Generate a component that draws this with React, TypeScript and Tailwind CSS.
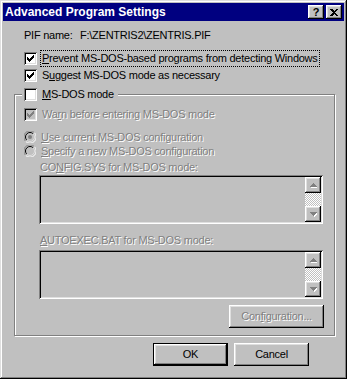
import React from "react";

const raised =
  "shadow-[inset_-1px_-1px_#000,inset_1px_1px_#fff,inset_-2px_-2px_#808080,inset_2px_2px_#dfdfdf]";
const sunken =
  "shadow-[inset_1px_1px_#808080,inset_-1px_-1px_#fff,inset_2px_2px_#000,inset_-2px_-2px_#dfdfdf]";
const dimText = "text-[#808080] [text-shadow:1px_1px_0_#fff]";

// 7x7 win95 check mark, row by row
const checkRows = ["......X", ".....XX", "X...XXX", "XX.XXX.", "XXXXX..", ".XXX...", "..X...."];

function Check({ color }: { color: string }) {
  return (
    <svg width="7" height="7" viewBox="0 0 7 7" shapeRendering="crispEdges">
      {checkRows.map((row, y) =>
        row.split("").map((c, x) =>
          c === "X" ? <rect key={`${x}-${y}`} x={x} y={y} width="1" height="1" fill={color} /> : null
        )
      )}
    </svg>
  );
}

function Checkbox({ checked, disabled }: { checked?: boolean; disabled?: boolean }) {
  return (
    <span
      className={`flex h-[13px] w-[13px] shrink-0 items-center justify-center ${sunken} ${
        disabled ? "bg-[#c0c0c0]" : "bg-white"
      }`}
    >
      {checked && <Check color={disabled ? "#808080" : "#000"} />}
    </span>
  );
}

function Radio({ selected }: { selected?: boolean }) {
  return (
    <svg width="12" height="12" viewBox="0 0 12 12" className="shrink-0">
      <circle cx="6" cy="6" r="5.5" fill="#c0c0c0" />
      <path d="M1.6 10.4 A5.5 5.5 0 0 1 10.4 1.6" stroke="#808080" fill="none" />
      <path d="M10.4 1.6 A5.5 5.5 0 0 1 1.6 10.4" stroke="#fff" fill="none" />
      <path d="M2.8 9.2 A4.5 4.5 0 0 1 9.2 2.8" stroke="#000" fill="none" />
      <path d="M9.2 2.8 A4.5 4.5 0 0 1 2.8 9.2" stroke="#dfdfdf" fill="none" />
      {selected && <circle cx="6" cy="6" r="2" fill="#808080" />}
    </svg>
  );
}

function Arrow({ down }: { down?: boolean }) {
  return (
    <svg width="8" height="5" viewBox="0 0 8 5" shapeRendering="crispEdges">
      {down ? (
        <>
          <path d="M2 1h7L5.5 5z" fill="#fff" />
          <path d="M1 0h7L4.5 4z" fill="#808080" />
        </>
      ) : (
        <>
          <path d="M5.5 1 9 5H2z" fill="#fff" />
          <path d="M4.5 0 8 4H1z" fill="#808080" />
        </>
      )}
    </svg>
  );
}

function TextBox() {
  return (
    <div className={`ml-[15px] flex h-[49px] w-[284px] justify-end bg-[#c0c0c0] p-[2px] ${sunken}`}>
      <div className="flex w-[16px] flex-col">
        <div className={`flex h-[16px] items-center justify-center bg-[#c0c0c0] ${raised}`}>
          <Arrow />
        </div>
        <div className="flex-1 bg-[repeating-conic-gradient(#fff_0_25%,#c0c0c0_0_50%)] bg-[length:2px_2px]" />
        <div className={`flex h-[16px] items-center justify-center bg-[#c0c0c0] ${raised}`}>
          <Arrow down />
        </div>
      </div>
    </div>
  );
}

export default function App() {
  return (
    <div
      className="flex h-[379px] w-[347px] flex-col bg-[#c0c0c0] p-[3px] text-[11px] leading-[13px] tracking-[-0.25px] text-black shadow-[inset_-1px_-1px_#000,inset_1px_1px_#dfdfdf,inset_-2px_-2px_#808080,inset_2px_2px_#fff]"
      style={{ fontFamily: '"Liberation Sans", Arial, sans-serif' }}
    >
      {/* title bar */}
      <div className="flex h-[18px] items-center justify-between bg-[#000080] pl-[2px] pr-[2px]">
        <span className="text-[12px] font-bold tracking-normal text-white">Advanced Program Settings</span>
        <div className="flex gap-[2px]">
          <div className={`flex h-[14px] w-[16px] items-center justify-center bg-[#c0c0c0] text-[11px] font-bold leading-none ${raised}`}>
            ?
          </div>
          <div className={`flex h-[14px] w-[16px] items-center justify-center bg-[#c0c0c0] ${raised}`}>
            <svg width="8" height="7" viewBox="0 0 8 7" shapeRendering="crispEdges">
              <path d="M0 0h2l2 2 2-2h2L5 3.5 8 7H6L4 5 2 7H0l3-3.5z" fill="#000" />
            </svg>
          </div>
        </div>
      </div>

      <div className="flex flex-col px-[11px]">
        <div className="mt-[8px] flex h-[13px] pl-[10px]">
          <span className="w-[56px]">PIF name:</span>
          <span>F:\ZENTRIS2\ZENTRIS.PIF</span>
        </div>

        <div className="mt-[8px] flex h-[17px] items-center pl-[10px]">
          <Checkbox checked />
          <span className="ml-[3px] border border-dotted border-black px-[1px] py-[1px]">
            <u>P</u>revent MS-DOS-based programs from detecting Windows
          </span>
        </div>
        <div className="flex h-[17px] items-center pl-[10px]">
          <Checkbox checked />
          <span className="ml-[4px] px-[1px]">
            S<u>u</u>ggest MS-DOS mode as necessary
          </span>
        </div>

        {/* group box */}
        <div className="relative mt-[10px] flex w-[321px] flex-col border border-[#808080] pb-[7px] pl-[9px] pt-[11px] shadow-[1px_1px_0_#fff,inset_1px_1px_0_#fff]">
          <div className="absolute -top-[7px] left-[7px] flex h-[13px] items-center bg-[#c0c0c0] pl-[2px] pr-[4px]">
            <Checkbox />
            <span className="ml-[5px]">
              <u>M</u>S-DOS mode
            </span>
          </div>

          <div className="flex h-[17px] items-center">
            <Checkbox checked disabled />
            <span className={`ml-[5px] ${dimText}`}>
              Wa<u>r</u>n before entering MS-DOS mode
            </span>
          </div>

          <div className="mt-[7px] flex h-[14px] items-center">
            <Radio selected />
            <span className={`ml-[5px] ${dimText}`}>
              <u>U</u>se current MS-DOS configuration
            </span>
          </div>
          <div className="flex h-[14px] items-center">
            <Radio />
            <span className={`ml-[5px] ${dimText}`}>
              <u>S</u>pecify a new MS-DOS configuration
            </span>
          </div>

          <span className={`ml-[16px] mt-[3px] ${dimText}`}>
            CO<u>N</u>FIG.SYS for MS-DOS mode:
          </span>
          <div className="mt-[1px]">
            <TextBox />
          </div>

          <span className={`ml-[16px] mt-[10px] ${dimText}`}>
            <u>A</u>UTOEXEC.BAT for MS-DOS mode:
          </span>
          <div className="mt-[3px]">
            <TextBox />
          </div>

          <div
            className={`mr-[10px] mt-[6px] flex h-[23px] w-[95px] items-center justify-center self-end bg-[#c0c0c0] ${raised} ${dimText}`}
          >
            Con<u>f</u>iguration...
          </div>
        </div>

        <div className="mr-[24px] mt-[7px] flex justify-end gap-[6px]">
          <div className="h-[23px] w-[75px] border border-black">
            <div className={`flex h-full w-full items-center justify-center bg-[#c0c0c0] ${raised}`}>OK</div>
          </div>
          <div className={`flex h-[23px] w-[75px] items-center justify-center bg-[#c0c0c0] ${raised}`}>
            Cancel
          </div>
        </div>
      </div>
    </div>
  );
}
